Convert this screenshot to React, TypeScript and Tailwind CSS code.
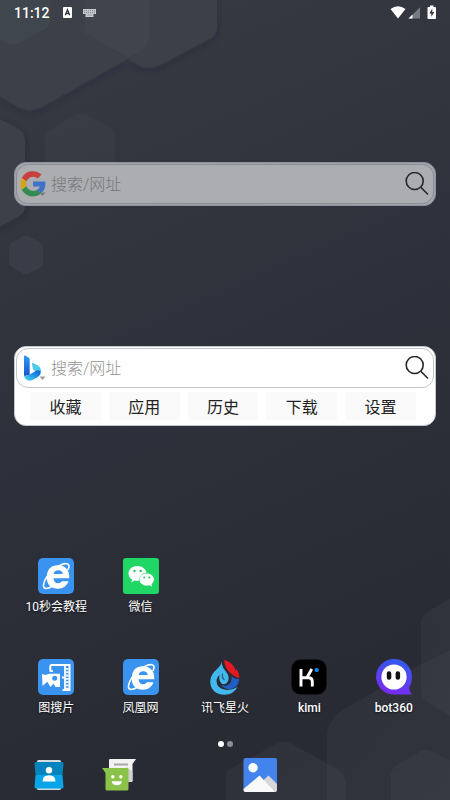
import type { ReactNode } from "react";

function Wallpaper() {
  return (
    <svg
      className="absolute inset-0 -z-10 h-full w-full"
      viewBox="0 0 450 800"
      preserveAspectRatio="xMidYMid slice"
      aria-hidden="true"
    >
      <defs>
        <linearGradient id="sky" x1="0" y1="0" x2="0.25" y2="1">
          <stop offset="0" stopColor="#393d46" />
          <stop offset="0.2" stopColor="#343640" />
          <stop offset="0.55" stopColor="#2e303b" />
          <stop offset="0.75" stopColor="#2b2d37" />
          <stop offset="1" stopColor="#292b34" />
        </linearGradient>
        <linearGradient id="fade" x1="0" y1="0" x2="0" y2="1">
          <stop offset="0" stopColor="#3c4249" stopOpacity="0.45" />
          <stop offset="1" stopColor="#3a434b" stopOpacity="0.3" />
        </linearGradient>
        <linearGradient id="lowFade" x1="0" y1="0" x2="1" y2="1">
          <stop offset="0" stopColor="#50555e" stopOpacity="0.16" />
          <stop offset="1" stopColor="#50555e" stopOpacity="0.2" />
        </linearGradient>
        <filter id="shade" x="-20%" y="-20%" width="140%" height="140%">
          <feDropShadow dx="0" dy="2" stdDeviation="4" floodColor="#20222c" floodOpacity="0.25" />
        </filter>
      </defs>
      <rect width="450" height="800" fill="url(#sky)" />
      <g filter="url(#shade)">
        <path d="M85 -5H217V28Q217 34 211 38L160 65Q149 71 138 65L85 33Z" fill="#3b3f49" />
        <path d="M-10 -5H149V38Q149 47 140 52L42 107Q30 113 20 108L-10 91Z" fill="#3b3f48" />
      </g>
      <path d="M85 -5H149V38Q149 47 140 52L128 58L85 33Z" fill="#444852" opacity="0.5" />
      <path d="M-10 -5H50V21Q50 26 45 29L20 43Q14 46 8 44L-10 36Z" fill="#454c54" opacity="0.5" />
      <g filter="url(#shade)">
        <path d="M-5 117L19 129Q25 133 25 141V206Q25 213 19 216L-5 229Z" fill="#3d404a" />
      </g>
      <path d="M45 140Q45 132 51 129L75 115Q81 112 87 115L109 126Q115 129 115 136V190H45Z" fill="url(#fade)" />
      <path d="M22 237Q26 234 30 237L40 242Q43 244 43 248V262Q43 266 40 268L30 273Q26 275 22 273L12 267Q9 265 9 262V248Q9 245 12 242Z" fill="#383d47" />
      <path d="M455 596L427 612Q421 616 421 623V692Q421 698 427 702L455 719Z" fill="url(#lowFade)" />
      <path d="M455 648L420 665L343 710Q327 720 327 738V805H455Z" fill="url(#lowFade)" />
      <path d="M226 805V777Q226 771 232 768L278 743Q284 740 290 743L337 769Q346 774 346 784V805Z" fill="url(#lowFade)" />
      <path d="M391 805V775Q391 769 397 765L421 751Q426 748 431 751L455 763V805Z" fill="url(#lowFade)" />
    </svg>
  );
}

function StatusBar() {
  return (
    <header className="flex h-[25px] items-center justify-between px-[14px] text-white">
      <div className="flex items-center">
        <time className="w-[49px] text-[14px] leading-[18px] font-medium">11:12</time>
        <svg className="h-[11px] w-[9px]" viewBox="0 0 9 11" aria-hidden="true">
          <rect width="9" height="11" rx="1" fill="#fff" />
          <path d="M2.3 8.2L4.5 2.8L6.7 8.2M3 6.5H6" fill="none" stroke="#30333d" strokeWidth="1.3" />
        </svg>
        <svg className="ml-[11px] h-[8px] w-[13px]" viewBox="0 0 13 8" aria-hidden="true">
          <path d="M0 0H13V5H10.5V8H2.5V5H0Z" fill="#c8cacf" />
          <path d="M1 1.7H12M1 3.7H12" stroke="#6a6e78" strokeWidth="0.8" strokeDasharray="1.2 0.8" />
          <path d="M3.5 6H9.5" stroke="#8b8e96" strokeWidth="0.8" />
        </svg>
      </div>
      <svg className="h-[15px] w-[46px]" viewBox="0 0 46 15" aria-label="Wi-Fi, signal, battery charging">
        <path d="M0.5 4Q8 -1.7 15.5 4L8 13.5Z" fill="#fff" />
        <path d="M30 2.3V13.5H18.5Z" fill="#777a82" />
        <path d="M22.5 9.5V13.5H18.5Z" fill="#fff" />
        <path d="M40 0.5H43.5V2H45Q46 2 46 3V13Q46 14 45 14H38.5Q37.5 14 37.5 13V3Q37.5 2 38.5 2H40Z" fill="#fff" />
        <path d="M42.3 3.5L39.4 8.5H41.3V12L44.2 7H42.3Z" fill="#30333d" />
      </svg>
    </header>
  );
}

function GoogleLogo() {
  return (
    <svg className="h-[26px] w-[26px]" viewBox="0 0 26 26" aria-hidden="true">
      <path d="M1.8 7A12.6 12.6 0 0 1 21.6 3.5L17.7 7.5A6.9 6.9 0 0 0 6.5 10.6Z" fill="#c8403c" />
      <path d="M1.8 7A12.6 12.6 0 0 0 1.8 18.7L6.5 15.2A7.5 7.5 0 0 1 6.5 10.6Z" fill="#d3a31e" />
      <path d="M1.8 18.7A12.4 12.4 0 0 0 21.3 22.3L17 18.8A7 7 0 0 1 6.5 15.2Z" fill="#328b50" />
      <path d="M13 10.5H25.2Q26.2 18 21.3 22.3L17 18.8Q19.3 17.5 19.8 15.4H13Z" fill="#3d72c6" />
      <path d="M19.5 21.5H25.5L22.5 25Z" fill="#777b80" />
    </svg>
  );
}

function BingLogo() {
  return (
    <svg className="h-[26px] w-[26px]" viewBox="0 0 26 26" aria-hidden="true">
      <defs>
        <linearGradient id="bingStem" x1="0" y1="0" x2="0" y2="1">
          <stop offset="0" stopColor="#2e9bf0" />
          <stop offset="1" stopColor="#1554d4" />
        </linearGradient>
        <linearGradient id="bingBowl" x1="1" y1="0" x2="0" y2="1">
          <stop offset="0" stopColor="#1457cf" />
          <stop offset="0.5" stopColor="#249be8" />
          <stop offset="1" stopColor="#52dcf5" />
        </linearGradient>
      </defs>
      <path d="M4 1.3Q4 0 5.3 .6L8.5 2.5Q9.7 3 9.7 4.5V20L4 21Z" fill="url(#bingStem)" />
      <path d="M12 9Q11.5 7.6 13 8L17.5 10.3Q22 13 20.8 18L15.5 16Q13.4 15.3 13 14Z" fill="#48cbe9" />
      <path d="M4 20Q5 22.5 9.7 19.6L15.5 15.9Q19.5 14 20.5 17Q21.3 20.3 17.5 22.3L12.5 25Q8.5 26.8 5.5 24Q4 22.3 4 20Z" fill="url(#bingBowl)" />
      <path d="M19.5 21.5H25.5L22.5 25Z" fill="#9b9da2" />
    </svg>
  );
}

function SearchField({ logo, engine, className, inputClass }: { logo: ReactNode; engine: string; className: string; inputClass: string }) {
  return (
    <form role="search" onSubmit={(e) => e.preventDefault()} className={`flex h-[40px] items-center rounded-[12px] border pr-[4px] pl-[3px] ${className}`}>
      <button type="button" aria-label={engine} className="shrink-0">{logo}</button>
      <input
        type="text"
        aria-label="搜索/网址"
        placeholder="搜索/网址"
        className={`ml-[5px] h-[36px] min-w-0 flex-1 bg-transparent text-[16px] leading-[32px] font-light outline-none ${inputClass}`}
      />
      <button type="submit" aria-label="搜索" className="shrink-0">
        <svg className="h-[24px] w-[24px]" viewBox="0 0 24 24" fill="none" stroke="#26282b" strokeWidth="1.6" aria-hidden="true">
          <circle cx="9.7" cy="9" r="8.5" />
          <path d="M15.8 15.2L23 22.5" />
        </svg>
      </button>
    </form>
  );
}

function BrowserE() {
  return (
    <svg className="h-[36px] w-[36px]" viewBox="0 0 36 36" aria-hidden="true">
      <rect width="36" height="36" rx="5" fill="#3b93f0" />
      <path fillRule="evenodd" d="M31.3 20.3H15.5Q16 25.3 20 25.3Q22.8 25.3 24 23.3H30.6Q28 30.7 19.7 30.7Q8.7 30.3 8.7 19Q9.2 7.6 20 7.3Q31.5 7.7 31.3 20.3ZM15.6 16.1H24.8Q24.4 12.2 20.2 12.2Q16.2 12.2 15.6 16.1Z" fill="#fff" />
      <path d="M29.8 12Q32.7 6.2 28.8 5.7Q24.8 5.2 17.8 9.8Q9.8 15.5 6.7 22.8Q3.9 29.7 7.4 30.4Q10 30.7 15 28" fill="none" stroke="#fff" strokeWidth="1.6" />
    </svg>
  );
}

function WeChat() {
  return (
    <svg className="h-[36px] w-[36px]" viewBox="0 0 36 36" aria-hidden="true">
      <rect width="36" height="36" rx="3" fill="#20d664" />
      <path d="M14.5 8C9.4 8 5.5 11.2 5.5 15.4Q5.5 19.2 9 21.4L8.2 24.4L11.7 22.5Q14 23.1 16 22.7A7.5 7.5 0 0 1 23.5 14.8C22.8 10.8 19 8 14.5 8Z" fill="#fff" />
      <path d="M23.7 15.5C19.6 15.5 16.5 18.2 16.5 21.5C16.5 25 19.8 27.6 23.7 27.6Q25.1 27.6 26.4 27.2L29.2 28.8L28.5 26.2Q31 24.3 31 21.5C31 18.2 27.8 15.5 23.7 15.5Z" fill="#fff" />
      <g fill="#20c761">
        <circle cx="11.5" cy="13" r="1.2" /><circle cx="17.7" cy="13" r="1.2" />
        <circle cx="21.2" cy="19.5" r="1" /><circle cx="26.2" cy="19.5" r="1" />
      </g>
    </svg>
  );
}

function PictureSearch() {
  return (
    <svg className="h-[36px] w-[36px]" viewBox="0 0 36 36" aria-hidden="true">
      <rect width="36" height="36" rx="5" fill="#3b93f0" />
      <path d="M12.3 12.5V7.5Q12.3 6 13.8 6H31.5V31H24.5" fill="none" stroke="#fff" strokeWidth="2" />
      <path d="M12.3 12.2H15M27 7V31M27 18.5H24" stroke="#fff" strokeWidth="1.8" />
      <path d="M29.3 9V30" stroke="#fff" strokeWidth="2.5" strokeDasharray="1.8 1.5" />
      <path d="M4 15L7.5 16L11 14.7H22V28H17.5L15.5 24.5L12.5 28L9.3 22.8L4.5 27Z" fill="#fff" />
      <circle cx="16.7" cy="19.3" r="2.5" fill="#3b93f0" />
    </svg>
  );
}

function Spark() {
  return (
    <svg className="h-[36px] w-[36px]" viewBox="0 0 36 36" aria-hidden="true">
      <path d="M15 2Q14.5 6 10 10Q3.2 16 3.2 22.5Q4 35.5 17.5 35.7Q26.500 35.500 30.500 28Q25 31.500 18.500 30.800Q10 29.500 9.500 22.500Q9.500 18.500 12.500 16Q11.500 21.500 14.500 24.500Q17.500 26.500 20.300 23.500Q23 19.500 20.500 15L16 8.500Q14.300 5 15 2Z" fill="#42b9ed" />
      <path d="M15.500 14.500Q14.700 19 17.500 21" fill="none" stroke="#2c607e" strokeWidth="1.300" />
      <path d="M17.300 .8Q27.500 4.500 28.500 11.500L29.300 10Q32.500 14 32.300 19Q27.500 18 22.500 13.300Q17 8 17.300 .8Z" fill="#e31923" />
      <path d="M24.500 17.500Q28 20 32 20Q32 25 28.500 28Q24 31 19 29.500Q15.500 28.500 14 25.500Q19.500 28.500 23 24.500Q25.300 21.500 24.500 17.500Z" fill="#1f5fc4" />
    </svg>
  );
}

function Kimi() {
  return (
    <svg className="h-[36px] w-[36px]" viewBox="0 0 36 36" aria-hidden="true">
      <rect width="35" height="35" x=".5" y=".5" rx="9" fill="#000" />
      <path d="M10 10V27.5M11 18.8H17.5Q21.3 18.8 21.3 22.5V27.5M16 18.5L20.8 10" fill="none" stroke="#fff" strokeWidth="2.9" />
      <rect x="23.7" y="9" width="4" height="4" rx="1.5" fill="#1781eb" />
    </svg>
  );
}

function Bot360() {
  return (
    <svg className="h-[36px] w-[36px]" viewBox="0 0 36 36" aria-hidden="true">
      <defs>
        <linearGradient id="bot" x1="0.65" y1="0" x2="0.35" y2="1">
          <stop offset="0" stopColor="#315cef" />
          <stop offset="1" stopColor="#7b29f0" />
        </linearGradient>
      </defs>
      <path d="M18 0A18 18 0 0 0 0 18A18 18 0 0 0 18 35.5H36Q33 32 33.5 28Q36 24 36 18A18 18 0 0 0 18 0Z" fill="url(#bot)" />
      <circle cx="18" cy="18" r="12.6" fill="#fff" />
      <rect x="10.8" y="12.2" width="4.5" height="8.6" rx="2.2" fill="#111" />
      <rect x="19.6" y="12.2" width="4.5" height="8.6" rx="2.2" fill="#111" />
    </svg>
  );
}

function Contacts() {
  return (
    <svg className="h-[36px] w-[36px]" viewBox="0 0 36 36" aria-hidden="true">
      <rect x="6" y="3" width="24" height="30" rx="1.5" fill="#d3dbe0" />
      <path d="M5 5H31Q32.5 5 32.5 6.5L31.5 18H4.5L3.5 6.5Q3.5 5 5 5Z" fill="#0583bd" />
      <path d="M4.5 18H31.5L32.5 30Q32.5 31.5 31 31.5H5Q3.5 31.5 3.5 30Z" fill="#07a4e8" />
      <circle cx="18" cy="13.3" r="3.2" fill="#fff" />
      <path d="M11.5 24.5Q11.5 18.3 18 18.3Q24.5 18.3 24.5 24.5Z" fill="#fff" />
    </svg>
  );
}

function Messenger() {
  return (
    <svg className="h-[36px] w-[36px]" viewBox="0 0 36 36" aria-hidden="true">
      <path d="M9 2H35L31.5 7V24Q31.5 25 30.5 25H9Q8 25 8 24V3Q8 2 9 2Z" fill="#f2f2f2" />
      <path d="M26 10L31.5 15V24L28 25H26Z" fill="#cfd0cf" />
      <path d="M13 7.5H27" stroke="#a8a8a8" strokeWidth="2" />
      <path d="M1 11H26Q27.5 11 27.5 12.5V32Q27.5 33.5 26 33.5H6Q4.5 33.5 4.5 32V16Z" fill="#8bc34a" />
      <circle cx="11.8" cy="19.8" r="1.7" fill="#fff" />
      <circle cx="19.8" cy="19.8" r="1.7" fill="#fff" />
      <path d="M10.7 24.3H21Q20.3 28.3 15.8 28.3Q11.4 28.3 10.7 24.3Z" fill="#fff" />
    </svg>
  );
}

function Gallery() {
  return (
    <svg className="h-[36px] w-[36px]" viewBox="0 0 36 36" aria-hidden="true">
      <rect x="1.5" y="1" width="33.5" height="34" rx="2" fill="#4284eb" />
      <circle cx="11" cy="10.8" r="4.7" fill="#fff" />
      <path d="M21 23.5L26.5 18.5L35 27V33Q35 35 33 35H24Z" fill="#d7d7d7" />
      <path d="M1.5 32L17.5 18.5L33 35H3.5Q1.5 35 1.5 33Z" fill="#fafafa" />
    </svg>
  );
}

function AppButton({ icon, label, latin = false }: { icon: ReactNode; label: string; latin?: boolean }) {
  return (
    <button type="button" className="flex flex-col items-center gap-[4px] whitespace-nowrap text-white">
      {icon}
      <span className={`text-[12px] leading-[18px] [text-shadow:0_1px_2px_rgba(0,0,0,0.6)] ${latin ? "font-medium" : "font-normal"}`}>{label}</span>
    </button>
  );
}

export default function App() {
  const menu = ["收藏", "应用", "历史", "下载", "设置"];
  return (
    <main className="relative isolate flex min-h-screen flex-col overflow-hidden bg-[#2e303a] font-[Roboto,'Noto_Sans_CJK_SC',sans-serif]">
      <Wallpaper />
      <StatusBar />
      <section className="mx-[14px] mt-[137px] rounded-[12px] border border-[#8e919b] bg-[#a3a5ab] p-px">
        <SearchField engine="Google" logo={<GoogleLogo />} className="border-[#8a8c96] bg-[#abadb0]" inputClass="placeholder:text-[#75777b]" />
      </section>
      <section className="mx-[14px] mt-[140px] rounded-[12px] border border-[#c4c7cf] bg-white p-px">
        <SearchField engine="Bing" logo={<BingLogo />} className="border-[#c3c4cb] bg-white" inputClass="placeholder:text-[#929292]" />
        <nav className="flex gap-[8px] pt-[4px] pr-[18px] pb-[4px] pl-[14px]">
          {menu.map((item) => (
            <button key={item} type="button" className="flex-1 rounded-[2px] bg-[#fafafa] pt-[4px] text-[16px] leading-[24px] text-[#222]">
              {item}
            </button>
          ))}
        </nav>
      </section>
      <section aria-label="应用" className="mx-[14px] mt-[132px] grid grid-cols-5 gap-y-[43px]">
        <AppButton icon={<BrowserE />} label="10秒会教程" />
        <AppButton icon={<WeChat />} label="微信" />
        <div className="col-span-3" />
        <AppButton icon={<PictureSearch />} label="图搜片" />
        <AppButton icon={<BrowserE />} label="凤凰网" />
        <AppButton icon={<Spark />} label="讯飞星火" />
        <AppButton icon={<Kimi />} label="kimi" latin />
        <AppButton icon={<Bot360 />} label="bot360" latin />
      </section>
      <div className="mt-[24px] flex justify-center gap-[3px]">
        <span className="h-[6px] w-[6px] rounded-full bg-white" />
        <span className="h-[6px] w-[6px] rounded-full bg-[#8c8e95]" />
      </div>
      <footer className="mx-[14px] mt-[10px] grid grid-cols-6 justify-items-center">
        <button type="button" aria-label="联系人"><Contacts /></button>
        <button type="button" aria-label="信息"><Messenger /></button>
        <span />
        <button type="button" aria-label="图库"><Gallery /></button>
      </footer>
    </main>
  );
}
